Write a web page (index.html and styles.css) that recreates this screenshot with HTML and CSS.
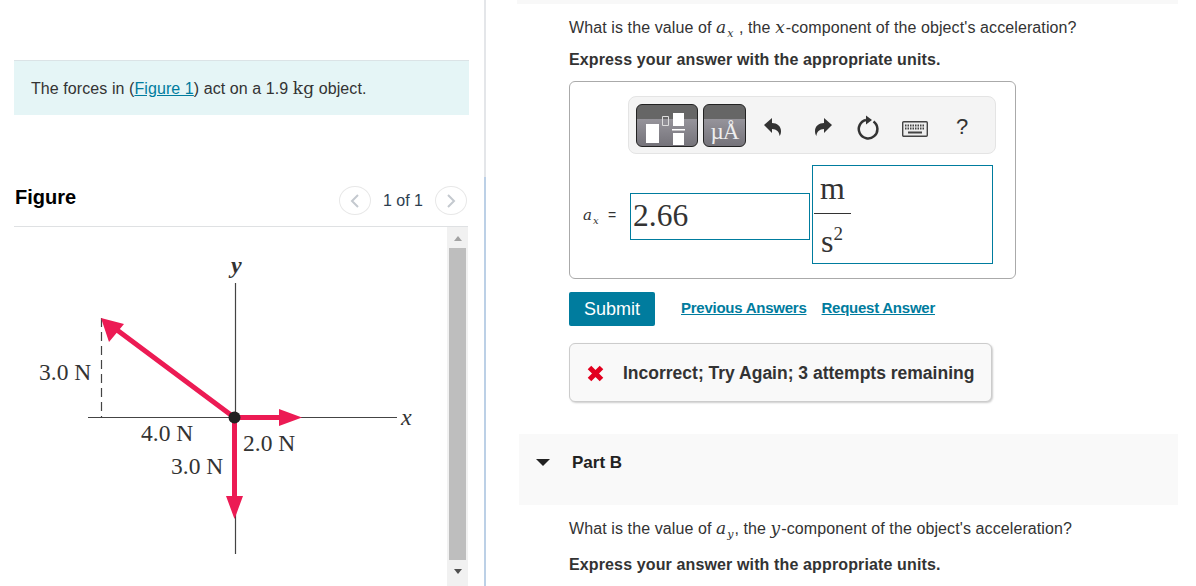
FILE: index.html
```html
<!DOCTYPE html>
<html lang="en">

<head>
    <meta charset="UTF-8">
    <title>Forces on an object</title>
    <link rel="stylesheet" href="styles.css">
</head>

<body>
    <div class="page">
        <div class="left">
            <div class="intro">The forces in (<a href="#">Figure 1</a>) act on a 1.9 <span class="unit-kg">kg</span> object.</div>

            <div class="figure-head">
                <h2>Figure</h2>
                <div class="pager">
                    <span class="pager-btn">
                        <svg width="10" height="14" viewBox="0 0 10 14"><path d="M8 1 2 7l6 6" fill="none" stroke="#c4c9cf" stroke-width="2"/></svg>
                    </span>
                    <span class="pager-text">1 of 1</span>
                    <span class="pager-btn">
                        <svg width="10" height="14" viewBox="0 0 10 14"><path d="M2 1l6 6-6 6" fill="none" stroke="#c4c9cf" stroke-width="2"/></svg>
                    </span>
                </div>
            </div>

            <div class="figure-body">
                <svg class="diagram" width="433" height="359" viewBox="14 227 433 359">
                    <path d="M235.500 283V554M88 417.500H397" fill="none" stroke="#444" stroke-width="1.200"/>
                    <path d="M101.500 318V418" fill="none" stroke="#444" stroke-width="1.200" stroke-dasharray="9 5"/>
                    <path d="M235 418 113 327M235 417.500H282M234.500 418V500" fill="none" stroke="#ec1b54" stroke-width="5"/>
                    <path d="M101 318l23 6-15 18zM302 417.500l-23-8.500v17zM234.500 519l-8.500-23h17z" fill="#ec1b54"/>
                    <circle cx="234.500" cy="417.500" r="6" fill="#222"/>
                    <text class="fig-label" x="39" y="380">3.0 N</text>
                    <text class="fig-label" x="141" y="441">4.0 N</text>
                    <text class="fig-label" x="243" y="451">2.0 N</text>
                    <text class="fig-label" x="171" y="474">3.0 N</text>
                    <text class="fig-axis fig-axis-y" x="229" y="273">y</text>
                    <text class="fig-axis" x="401" y="425">x</text>
                </svg>
                <div class="scrollbar">
                    <span class="scroll-up"></span>
                    <span class="scroll-thumb"></span>
                    <span class="scroll-down"></span>
                </div>
            </div>
        </div>

        <div class="right">
            <div class="top-strip"></div>
            <div class="part">
                <p class="question">What is the value of <span class="math">a<sub>x</sub></span> , the <span class="math">x</span>-component of the object's acceleration?</p>
                <p class="express">Express your answer with the appropriate units.</p>

                <div class="answer-box">
                    <div class="toolbar">
                        <span class="tool-btn tool-template">
                            <svg width="62" height="43" viewBox="0 0 62 43">
                                <path d="M10 20h13v19H10zM37 9h11v13H37zM37 29h11v12H37zM36 25h13v1.500H36z" fill="#fff"/>
                                <path d="M26.500 12.500h6v9h-6z" fill="none" stroke="#ddd"/>
                            </svg>
                        </span>
                        <span class="tool-btn tool-units">µÅ</span>
                        <span class="tool-icon tool-undo">
                            <svg width="20" height="22" viewBox="0 0 20 22"><path d="M1 8 9 1v5c5 0 9 3 9 8 0 2-.500 4-1.500 5 0-4-3-7-7.500-7v4z" fill="#333"/></svg>
                        </span>
                        <span class="tool-icon">
                            <svg width="20" height="22" viewBox="0 0 20 22"><path d="M19 8 11 1v5C6 6 2 9 2 14c0 2 .500 4 1.500 5 0-4 3-7 7.500-7v4z" fill="#333"/></svg>
                        </span>
                        <span class="tool-icon">
                            <svg width="24" height="26" viewBox="0 0 24 26"><path d="M16.500 6.500A9.300 9.300 0 1 1 9 5" fill="none" stroke="#333" stroke-width="2.500"/><path d="M9 .500v9l6-4.500z" fill="#333"/></svg>
                        </span>
                        <span class="tool-icon tool-keys">
                            <svg width="26" height="16" viewBox="0 0 26 16"><rect x=".700" y=".700" width="24.600" height="14.600" rx="1" fill="#eee" stroke="#444" stroke-width="1.400"/><path d="M3 4.500h20M3 7.500h20" stroke="#444" stroke-width="2" stroke-dasharray="1.500 1"/><path d="M6 11.500h14" stroke="#444" stroke-width="2"/></svg>
                        </span>
                        <span class="tool-help">?</span>
                    </div>

                    <div class="answer-row">
                        <span class="answer-label"><span class="math">a<sub>x</sub></span> <span class="equals">=</span></span>
                        <span class="value-input">2.66</span>
                        <span class="unit-input">
                            <span class="fraction">
                                <span class="frac-top">m</span>
                                <span class="frac-bottom">s<sup>2</sup></span>
                            </span>
                        </span>
                    </div>
                </div>

                <div class="actions">
                    <button class="submit" type="button">Submit</button>
                    <a href="#">Previous Answers</a>
                    <a href="#">Request Answer</a>
                </div>

                <div class="feedback">
                    <svg width="17" height="17" viewBox="0 0 17 17"><path d="M2.500 2.500l12 12M14.500 2.500l-12 12" fill="none" stroke="#e2001f" stroke-width="5"/></svg>
                    <span>Incorrect; Try Again; 3 attempts remaining</span>
                </div>
            </div>

            <div class="part-head">
                <span class="caret"></span>
                <span>Part B</span>
            </div>

            <div class="part part-b">
                <p class="question">What is the value of <span class="math">a<sub>y</sub></span>, the <span class="math">y</span>-component of the object's acceleration?</p>
                <p class="express">Express your answer with the appropriate units.</p>
            </div>
        </div>
    </div>
</body>

</html>
```

FILE: styles.css
```css
html,
body {
    margin: 0;
    height: 586px;
    overflow: hidden;
    background-color: #fff;
}

body {
    font-family: "Liberation Sans", Arial, sans-serif;
    font-size: 16px;
    color: #333;
}

a {
    color: #007c9e;
}

.page {
    display: flex;
    height: 586px;
}

/* left column */
.left {
    width: 486px;
    flex: none;
    box-sizing: border-box;
    padding: 60px 15px 0 14px;
    border-right: 2px solid #e4e6e9;
    position: relative;
}

.left::after {
    content: "";
    position: absolute;
    top: 177px;
    bottom: 0;
    right: -2px;
    width: 2px;
    background-color: #bcd0e6;
}

.intro {
    height: 55px;
    box-sizing: border-box;
    padding: 18px 17px 0;
    border-top: 1px solid #dbe3e6;
    background-color: #e5f5f6;
    line-height: 18px;
    letter-spacing: .08px;
}

.unit-kg {
    font-family: "DejaVu Serif", "Liberation Serif", serif;
    font-size: 17px;
    font-weight: normal;
}

.figure-head {
    display: flex;
    justify-content: space-between;
    align-items: flex-start;
    height: 112px;
    width: 454px;
    box-sizing: border-box;
    padding: 70px 1px 0 1px;
    border-bottom: 1px solid #dfe1e3;
}

.figure-head h2 {
    margin: 0;
    font-size: 20px;
    line-height: 24px;
    color: #000;
}

.pager {
    display: flex;
    align-items: center;
    gap: 12px;
    margin-top: 1px;
}

.pager-btn {
    display: flex;
    align-items: center;
    justify-content: center;
    width: 30px;
    height: 27px;
    border: 1px solid #e8e8e8;
    border-radius: 50%;
}

.pager-text {
    padding-top: 1px;
    color: #2c3e50;
}

.figure-body {
    display: flex;
    height: 359px;
}

.diagram {
    flex: none;
}

.fig-label {
    font-family: "Liberation Serif", serif;
    font-size: 23.5px;
    fill: #333;
}

.fig-axis {
    font-family: "Liberation Serif", serif;
    font-size: 24px;
    font-style: italic;
    fill: #333;
}

.fig-axis-y {
    font-weight: bold;
    transform: translateX(2px);
}

.scrollbar {
    display: flex;
    flex-direction: column;
    align-items: center;
    width: 21px;
    height: 359px;
    background-color: #f1f1f1;
}

.scroll-up,
.scroll-down {
    width: 0;
    height: 0;
    border-left: 4.5px solid transparent;
    border-right: 4.5px solid transparent;
}

.scroll-up {
    margin: 9px 0 7px;
    border-bottom: 5px solid #a3a3a3;
}

.scroll-thumb {
    width: 17px;
    height: 312px;
    background-color: #bebebe;
}

.scroll-down {
    margin-top: 9px;
    border-top: 5px solid #505050;
}

/* right column */
.right {
    flex: none;
    width: 661px;
    margin-left: 31px;
}

.top-strip {
    height: 4px;
    background-color: #f8f8f8;
}

.part {
    padding: 14px 0 0 52px;
}

.question {
    margin: 0;
    line-height: 19px;
    letter-spacing: .1px;
}

.express {
    margin: 13px 0 0;
    font-weight: bold;
    line-height: 19px;
    letter-spacing: .13px;
}

.math {
    font-family: "DejaVu Serif", serif;
    font-style: italic;
    font-size: 17px;
    letter-spacing: 1px;
}

.math sub {
    font-size: 11px;
    line-height: 0;
}

.answer-box {
    width: 445px;
    height: 196px;
    margin-top: 12px;
    border: 1px solid #aaa;
    border-radius: 6px;
}

.toolbar {
    display: flex;
    align-items: center;
    width: 366px;
    height: 56px;
    margin: 14px 0 0 58px;
    border: 1px solid #e4e4e4;
    border-radius: 8px;
    background-color: #f4f4f4;
}

.tool-btn {
    flex: none;
    box-sizing: border-box;
    height: 43px;
    border: 1px solid #222;
    border-radius: 6px;
    background: linear-gradient(#666 0 14px, #96949b 14px, #75737a);
}

.tool-template {
    width: 62px;
    margin-left: 7px;
}

.tool-template svg {
    display: block;
    margin: -1px;
}

.tool-units {
    width: 43px;
    margin-left: 5px;
    padding-top: 12px;
    font-family: "Liberation Serif", serif;
    font-size: 23px;
    letter-spacing: -1px;
    line-height: 30px;
    text-align: center;
    color: #eee;
    white-space: nowrap;
}

.tool-icon {
    display: flex;
    justify-content: center;
    flex: none;
    width: 46px;
    padding-top: 5px;
}

.tool-undo {
    margin: 0 4px;
}

.tool-keys {
    padding-top: 8px;
}

.tool-help {
    flex: none;
    width: 48px;
    padding-top: 4px;
    font-size: 22px;
    text-align: center;
}

.answer-row {
    display: flex;
    align-items: center;
    margin: 11px 0 0 13px;
}

.answer-label {
    width: 47px;
    flex: none;
    font-size: 12px;
}

.answer-label .math {
    font-size: 15px;
}

.answer-label .math sub {
    font-size: 10px;
}

.equals {
    margin-left: 5px;
    font-size: 14px;
}

.value-input {
    box-sizing: border-box;
    width: 180px;
    height: 47px;
    margin-top: 4px;
    padding-left: 2px;
    border: 1px solid #007c9e;
    font-family: "Liberation Serif", serif;
    font-size: 31.5px;
    line-height: 44px;
}

.unit-input {
    display: flex;
    box-sizing: border-box;
    width: 181px;
    height: 99px;
    margin-left: 2px;
    padding-left: 1px;
    border: 1px solid #007c9e;
    font-family: "Liberation Serif", serif;
    font-size: 32px;
}

.fraction {
    display: flex;
    flex-direction: column;
    width: 37px;
    margin-top: 6px;
}

.frac-top {
    flex: none;
    height: 41px;
    line-height: 33px;
    text-align: center;
    border-bottom: 1px solid #333;
}

.frac-bottom {
    flex: none;
    padding-left: 7px;
    line-height: 54px;
}

.frac-bottom sup {
    font-size: 19px;
    line-height: 0;
}

.actions {
    display: flex;
    align-items: center;
    margin-top: 13px;
    font-size: 15px;
    font-weight: bold;
}

.actions a {
    margin-right: 15px;
    padding-bottom: 4px;
    letter-spacing: -.25px;
}

.submit {
    width: 86px;
    height: 34px;
    margin-right: 26px;
    padding: 0;
    border: none;
    border-radius: 2px;
    background-color: #007c9e;
    color: #fff;
    font-family: inherit;
    font-size: 18px;
}

.feedback {
    display: flex;
    align-items: center;
    gap: 19px;
    box-sizing: border-box;
    width: 423px;
    height: 59px;
    margin-top: 17px;
    padding: 1px 0 0 17px;
    border: 1px solid #ccc;
    border-radius: 6px;
    background-color: #f9f9f9;
    box-shadow: 1px 1px 2px rgba(0, 0, 0, .2);
    font-size: 17.5px;
    font-weight: bold;
    white-space: nowrap;
}

.part-head {
    display: flex;
    align-items: center;
    height: 71px;
    box-sizing: border-box;
    margin: 32px 0 0 2px;
    padding: 0 0 14px 17px;
    background-color: #f9f9f9;
    font-size: 17px;
    font-weight: bold;
    color: #222;
}

.caret {
    width: 0;
    height: 0;
    margin-right: 22px;
    border-left: 7px solid transparent;
    border-right: 7px solid transparent;
    border-top: 7px solid #222;
}

.part-b {
    padding-top: 14px;
}

.part-b .express {
    margin-top: 17px;
}
```
